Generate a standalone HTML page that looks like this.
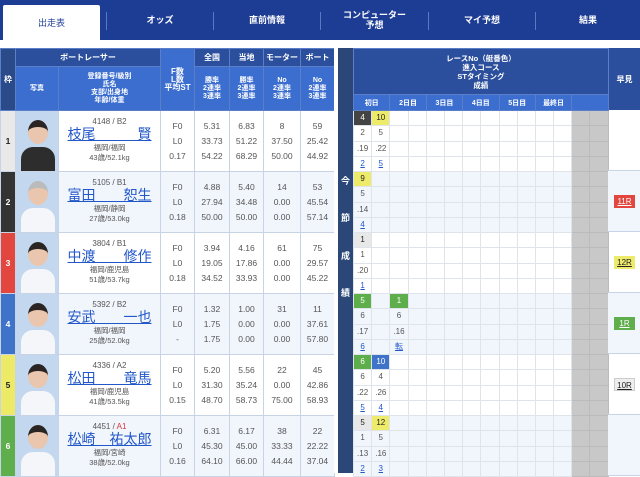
<!DOCTYPE html>
<html><head><meta charset="utf-8">
<style>
*{margin:0;padding:0;box-sizing:border-box}
body{width:640px;height:473px;overflow:hidden;background:#fff;font-family:"Liberation Sans","Noto Sans CJK JP",sans-serif;position:relative}
.nav{position:absolute;left:0;top:0;width:640px;height:40px;background:#1d3c94}
.tab{position:absolute;top:0;height:40px;color:#fff;font-size:9px;font-weight:bold;text-align:center;display:flex;align-items:center;justify-content:center;line-height:10px}
.tab.act{top:5px;height:36px;background:#fff;color:#1d3c94;font-weight:normal;border-radius:2px 2px 0 0}
.sep{position:absolute;top:12px;width:1px;height:18px;background:#5b78c4}
table{border-collapse:collapse;table-layout:fixed;position:absolute}
td{padding:0;text-align:center;overflow:hidden;white-space:nowrap}
.L{left:0;top:48px;width:334px}
.L th{color:#fff;font-weight:bold;font-size:7px;line-height:8px;border:1px solid #5a7fc8}
.h1 th{background:#2b4f9c;height:18px;font-size:8px}
.h2 th{background:#3c6ed0;height:44px}
.L td{border:1px solid #c9d3e6;height:61px;font-size:8.5px;color:#555}
.stat div{height:15px;line-height:15px}
.w{font-size:9px;font-weight:bold}
.nm{color:#555}
.nm .no{font-size:8px;margin-top:-2px}
.nm a{display:block;color:#2157c8;text-decoration:underline;font-size:14px;line-height:17px}
.nm .sm{font-size:7.5px;line-height:10px}
.ph{background:#c3d7ef;position:relative}
.ph i{position:absolute;left:12px;top:9px;width:20px;height:24px;border-radius:50%;background:#e9c6ad;border-top:7px solid #2a2522}
.ph b{position:absolute;left:5px;top:36px;width:34px;height:25px;border-radius:12px 12px 0 0;background:#f4f6f9}
.ph.d b{background:#2d2d2d}
.div{position:absolute;left:334px;top:48px;width:19px;height:425px;background:#2a4778;border-left:4px solid #fff}
.div span{position:absolute;left:3px;color:#fff;font-size:9px;font-weight:bold}
.R{left:353px;top:48px;width:255px}
.R th{color:#fff;font-size:7px;font-weight:bold;border:1px solid #5a7fc8}
.R td{height:15.25px;border:1px solid #dfe3ea;font-size:8px;color:#555;line-height:14px}
.R td.g{background:#c8c8c8;border-color:#bbb}
.R a{color:#2157c8;text-decoration:underline}
.hy{position:absolute;left:608px;top:48px;width:32px;height:62px;background:#2b4f9c;color:#fff;font-size:8px;font-weight:bold;display:flex;align-items:center;justify-content:center;border-left:1px solid #5a7fc8}
.hc{position:absolute;left:608px;width:32px;height:61px;border-bottom:1px solid #c9d3e6}
.hc span{position:absolute;left:6px;top:24px;width:21px;height:13px;font-size:8px;line-height:13px;text-align:center;text-decoration:underline;color:#222}
.k{background:#444;color:#fff!important}.y{background:#eeea6a;color:#222!important}.gr{background:#5fae4c;color:#fff!important}.b{background:#3f73c9;color:#fff!important}.lg{background:#e8e8e8;color:#222!important}
.alt{background:#f1f5fc}
</style></head><body>
<div class="nav">
<div class="tab act" style="left:3px;width:97px">出走表</div>
<div class="sep" style="left:106px"></div>
<div class="tab" style="left:107px;width:106px">オッズ</div>
<div class="sep" style="left:213px"></div>
<div class="tab" style="left:214px;width:106px">直前情報</div>
<div class="sep" style="left:320px"></div>
<div class="tab" style="left:321px;width:107px">コンピューター<br>予想</div>
<div class="sep" style="left:428px"></div>
<div class="tab" style="left:429px;width:106px">マイ予想</div>
<div class="sep" style="left:535px"></div>
<div class="tab" style="left:536px;width:104px">結果</div>
</div>

<table class="L">
<colgroup><col style="width:15px"><col style="width:43px"><col style="width:102px"><col style="width:34px"><col style="width:35px"><col style="width:34px"><col style="width:37px"><col style="width:34px"></colgroup>
<tr class="h1"><th rowspan="2" style="background:#2a4a8a;font-size:8px">枠</th><th colspan="2">ボートレーサー</th><th rowspan="2" style="background:#3c6ed0">F数<br>L数<br>平均ST</th><th>全国</th><th>当地</th><th>モーター</th><th>ボート</th></tr>
<tr class="h2"><th>写真</th><th>登録番号/級別<br>氏名<br>支部/出身地<br>年齢/体重</th><th>勝率<br>2連率<br>3連率</th><th>勝率<br>2連率<br>3連率</th><th>No<br>2連率<br>3連率</th><th>No<br>2連率<br>3連率</th></tr>
<tr><td class="w" style="background:#e9e9e9;color:#222">1</td><td class="ph d"><i></i><b></b></td><td class="nm"><div class="no">4148 / B2</div><a>枝尾　　　賢</a><div class="sm">福岡/福岡<br>43歳/52.1kg</div></td><td class="stat"><div>F0</div><div>L0</div><div>0.17</div></td><td class="stat"><div>5.31</div><div>33.73</div><div>54.22</div></td><td class="stat"><div>6.83</div><div>51.22</div><div>68.29</div></td><td class="stat"><div>8</div><div>37.50</div><div>50.00</div></td><td class="stat"><div>59</div><div>25.42</div><div>44.92</div></td></tr>
<tr class="alt"><td class="w" style="background:#333;color:#fff">2</td><td class="ph"><i style="border-top-color:#bbb"></i><b></b></td><td class="nm"><div class="no">5105 / B1</div><a>富田　　恕生</a><div class="sm">福岡/静岡<br>27歳/53.0kg</div></td><td class="stat"><div>F0</div><div>L0</div><div>0.18</div></td><td class="stat"><div>4.88</div><div>27.94</div><div>50.00</div></td><td class="stat"><div>5.40</div><div>34.48</div><div>50.00</div></td><td class="stat"><div>14</div><div>0.00</div><div>0.00</div></td><td class="stat"><div>53</div><div>45.54</div><div>57.14</div></td></tr>
<tr><td class="w" style="background:#e2463f;color:#fff">3</td><td class="ph"><i></i><b></b></td><td class="nm"><div class="no">3804 / B1</div><a>中渡　　修作</a><div class="sm">福岡/鹿児島<br>51歳/53.7kg</div></td><td class="stat"><div>F0</div><div>L0</div><div>0.18</div></td><td class="stat"><div>3.94</div><div>19.05</div><div>34.52</div></td><td class="stat"><div>4.16</div><div>17.86</div><div>33.93</div></td><td class="stat"><div>61</div><div>0.00</div><div>0.00</div></td><td class="stat"><div>75</div><div>29.57</div><div>45.22</div></td></tr>
<tr class="alt"><td class="w" style="background:#3f73c9;color:#fff">4</td><td class="ph"><i></i><b></b></td><td class="nm"><div class="no">5392 / B2</div><a>安武　　一也</a><div class="sm">福岡/福岡<br>25歳/52.0kg</div></td><td class="stat"><div>F0</div><div>L0</div><div>-</div></td><td class="stat"><div>1.32</div><div>1.75</div><div>1.75</div></td><td class="stat"><div>1.00</div><div>0.00</div><div>0.00</div></td><td class="stat"><div>31</div><div>0.00</div><div>0.00</div></td><td class="stat"><div>11</div><div>37.61</div><div>57.80</div></td></tr>
<tr><td class="w" style="background:#ecea66;color:#222">5</td><td class="ph"><i></i><b></b></td><td class="nm"><div class="no">4336 / A2</div><a>松田　　竜馬</a><div class="sm">福岡/鹿児島<br>41歳/53.5kg</div></td><td class="stat"><div>F0</div><div>L0</div><div>0.15</div></td><td class="stat"><div>5.20</div><div>31.30</div><div>48.70</div></td><td class="stat"><div>5.56</div><div>35.24</div><div>58.73</div></td><td class="stat"><div>22</div><div>0.00</div><div>75.00</div></td><td class="stat"><div>45</div><div>42.86</div><div>58.93</div></td></tr>
<tr class="alt"><td class="w" style="background:#5fae4c;color:#fff">6</td><td class="ph"><i></i><b></b></td><td class="nm"><div class="no">4451 / <span style="color:#d33">A1</span></div><a>松崎　祐太郎</a><div class="sm">福岡/宮崎<br>38歳/52.0kg</div></td><td class="stat"><div>F0</div><div>L0</div><div>0.16</div></td><td class="stat"><div>6.31</div><div>45.30</div><div>64.10</div></td><td class="stat"><div>6.17</div><div>45.00</div><div>66.00</div></td><td class="stat"><div>38</div><div>33.33</div><div>44.44</div></td><td class="stat"><div>22</div><div>22.22</div><div>37.04</div></td></tr>
</table>

<div class="div"><span style="top:126px">今</span><span style="top:163px">節</span><span style="top:201px">成</span><span style="top:238px">績</span></div>

<table class="R">
<colgroup><col span="14" style="width:18.2px"></colgroup>
<tr><th colspan="14" style="background:#2b4f9c;height:46px;line-height:9px;font-size:7.5px">レースNo（艇番色）<br>進入コース<br>STタイミング<br>成績</th></tr>
<tr><th colspan="2" style="background:#3c6ed0;height:16px">初日</th><th colspan="2" style="background:#3c6ed0">2日目</th><th colspan="2" style="background:#3c6ed0">3日目</th><th colspan="2" style="background:#3c6ed0">4日目</th><th colspan="2" style="background:#3c6ed0">5日目</th><th colspan="2" style="background:#3c6ed0">最終日</th><th colspan="2" style="background:#3c6ed0"></th></tr>
<tr><td class="k">4</td><td class="y">10</td><td></td><td></td><td></td><td></td><td></td><td></td><td></td><td></td><td></td><td></td><td class="g"></td><td class="g"></td></tr>
<tr><td>2</td><td>5</td><td></td><td></td><td></td><td></td><td></td><td></td><td></td><td></td><td></td><td></td><td class="g"></td><td class="g"></td></tr>
<tr><td>.19</td><td>.22</td><td></td><td></td><td></td><td></td><td></td><td></td><td></td><td></td><td></td><td></td><td class="g"></td><td class="g"></td></tr>
<tr><td><a>2</a></td><td><a>5</a></td><td></td><td></td><td></td><td></td><td></td><td></td><td></td><td></td><td></td><td></td><td class="g"></td><td class="g"></td></tr>
<tr class="alt"><td class="y">9</td><td></td><td></td><td></td><td></td><td></td><td></td><td></td><td></td><td></td><td></td><td></td><td class="g"></td><td class="g"></td></tr>
<tr class="alt"><td>5</td><td></td><td></td><td></td><td></td><td></td><td></td><td></td><td></td><td></td><td></td><td></td><td class="g"></td><td class="g"></td></tr>
<tr class="alt"><td>.14</td><td></td><td></td><td></td><td></td><td></td><td></td><td></td><td></td><td></td><td></td><td></td><td class="g"></td><td class="g"></td></tr>
<tr class="alt"><td><a>4</a></td><td></td><td></td><td></td><td></td><td></td><td></td><td></td><td></td><td></td><td></td><td></td><td class="g"></td><td class="g"></td></tr>
<tr><td class="lg">1</td><td></td><td></td><td></td><td></td><td></td><td></td><td></td><td></td><td></td><td></td><td></td><td class="g"></td><td class="g"></td></tr>
<tr><td>1</td><td></td><td></td><td></td><td></td><td></td><td></td><td></td><td></td><td></td><td></td><td></td><td class="g"></td><td class="g"></td></tr>
<tr><td>.20</td><td></td><td></td><td></td><td></td><td></td><td></td><td></td><td></td><td></td><td></td><td></td><td class="g"></td><td class="g"></td></tr>
<tr><td><a>1</a></td><td></td><td></td><td></td><td></td><td></td><td></td><td></td><td></td><td></td><td></td><td></td><td class="g"></td><td class="g"></td></tr>
<tr class="alt"><td class="gr">5</td><td></td><td class="gr">1</td><td></td><td></td><td></td><td></td><td></td><td></td><td></td><td></td><td></td><td class="g"></td><td class="g"></td></tr>
<tr class="alt"><td>6</td><td></td><td>6</td><td></td><td></td><td></td><td></td><td></td><td></td><td></td><td></td><td></td><td class="g"></td><td class="g"></td></tr>
<tr class="alt"><td>.17</td><td></td><td>.16</td><td></td><td></td><td></td><td></td><td></td><td></td><td></td><td></td><td></td><td class="g"></td><td class="g"></td></tr>
<tr class="alt"><td><a>6</a></td><td></td><td><a>転</a></td><td></td><td></td><td></td><td></td><td></td><td></td><td></td><td></td><td></td><td class="g"></td><td class="g"></td></tr>
<tr><td class="gr">6</td><td class="b">10</td><td></td><td></td><td></td><td></td><td></td><td></td><td></td><td></td><td></td><td></td><td class="g"></td><td class="g"></td></tr>
<tr><td>6</td><td>4</td><td></td><td></td><td></td><td></td><td></td><td></td><td></td><td></td><td></td><td></td><td class="g"></td><td class="g"></td></tr>
<tr><td>.22</td><td>.26</td><td></td><td></td><td></td><td></td><td></td><td></td><td></td><td></td><td></td><td></td><td class="g"></td><td class="g"></td></tr>
<tr><td><a>5</a></td><td><a>4</a></td><td></td><td></td><td></td><td></td><td></td><td></td><td></td><td></td><td></td><td></td><td class="g"></td><td class="g"></td></tr>
<tr class="alt"><td class="lg">5</td><td class="y">12</td><td></td><td></td><td></td><td></td><td></td><td></td><td></td><td></td><td></td><td></td><td class="g"></td><td class="g"></td></tr>
<tr class="alt"><td>1</td><td>5</td><td></td><td></td><td></td><td></td><td></td><td></td><td></td><td></td><td></td><td></td><td class="g"></td><td class="g"></td></tr>
<tr class="alt"><td>.13</td><td>.16</td><td></td><td></td><td></td><td></td><td></td><td></td><td></td><td></td><td></td><td></td><td class="g"></td><td class="g"></td></tr>
<tr class="alt"><td><a>2</a></td><td><a>3</a></td><td></td><td></td><td></td><td></td><td></td><td></td><td></td><td></td><td></td><td></td><td class="g"></td><td class="g"></td></tr>
</table>

<div class="hy">早見</div>
<div class="hc" style="top:110px"></div>
<div class="hc alt" style="top:171px"><span style="background:#e2463f;color:#fff">11R</span></div>
<div class="hc" style="top:232px"><span style="background:#eeea6a">12R</span></div>
<div class="hc alt" style="top:293px"><span style="background:#5fae4c;color:#fff">1R</span></div>
<div class="hc" style="top:354px"><span style="background:#eee;border:1px solid #ccc">10R</span></div>
<div class="hc alt" style="top:415px"></div>
</body></html>
